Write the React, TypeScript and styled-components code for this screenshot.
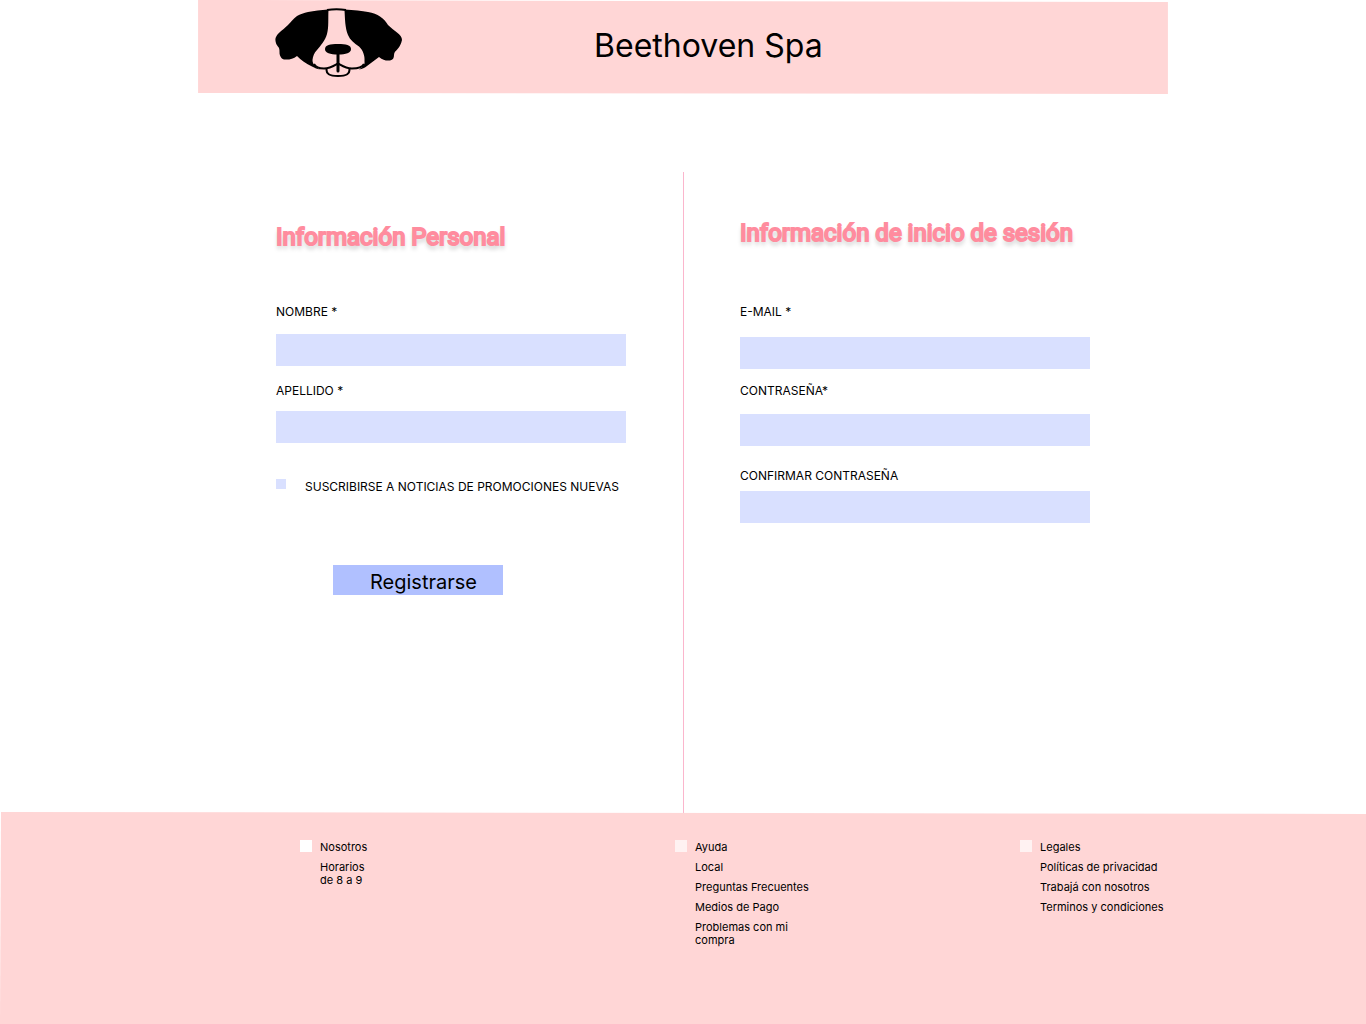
import React from "react";
import styled, { createGlobalStyle } from "styled-components";

const GlobalStyle = createGlobalStyle`
  *, *::before, *::after { box-sizing: border-box; }
  body {
    margin: 0;
    background: #ffffff;
    color: #000000;
    font-family: Inter, "Liberation Sans", sans-serif;
  }
`;

const Page = styled.div`
  display: flex;
  flex-direction: column;
  min-height: 100vh;
`;

const Header = styled.header`
  display: flex;
  align-items: flex-start;
  width: 71%;
  margin-left: 14.5%;
  padding: 8px 76px 17px;
  background: #ffd6d6;
  clip-path: polygon(0 0, 100% 2px, 100% 100%, 0 calc(100% - 1px));
`;

const Logo = styled.svg`
  flex: none;
  width: 130px;
  height: 69px;
`;

const Brand = styled.h1`
  margin: 18px 0 0 190px;
  font-size: 32px;
  line-height: 39px;
  font-weight: 400;
  white-space: nowrap;
`;

const Form = styled.form`
  flex: 1;
  display: grid;
  grid-template-columns: repeat(2, minmax(0, 1fr));
  margin-top: 78px;
  margin-bottom: -1px;
`;

const Column = styled.section<{ $side: "left" | "right" }>`
  display: flex;
  flex-direction: column;
  padding: ${(p) => (p.$side === "left" ? "50px 57px 0 276px" : "46px 276px 0 56px")};
  border-left: ${(p) => (p.$side === "right" ? "1px solid #fbb6cd" : "0")};
`;

const Heading = styled.h2<{ $gap: number }>`
  margin: 0 0 ${(p) => p.$gap}px;
  font-family: Roboto, "Liberation Sans", sans-serif;
  font-size: 24px;
  line-height: 30px;
  font-weight: 400;
  white-space: nowrap;
  color: #ff8fb0;
  -webkit-text-stroke: 2px #ff8c9e;
  text-shadow: 0 4px 4px rgba(0, 0, 0, 0.25);
`;

const Field = styled.div<{ $gap: number; $after: number }>`
  display: flex;
  flex-direction: column;
  gap: ${(p) => p.$gap}px;
  margin-bottom: ${(p) => p.$after}px;
`;

const Label = styled.label`
  font-size: 12px;
  line-height: 15px;
`;

const TextInput = styled.input`
  width: 100%;
  height: 32px;
  padding: 0 8px;
  border: 0;
  border-radius: 0;
  background: #d9e0ff;
  font: inherit;
  font-size: 14px;
`;

const CheckRow = styled.div`
  display: flex;
  align-items: flex-start;
  gap: 19px;
`;

const Checkbox = styled.input`
  appearance: none;
  flex: none;
  width: 10px;
  height: 10px;
  margin: 0;
  background: #d9e0ff;
  &:checked { background: #5f7fff; }
`;

const CheckLabel = styled(Label)`
  white-space: nowrap;
`;

const SubmitButton = styled.button`
  width: 170px;
  height: 30px;
  margin: 71px 0 0 57px;
  padding: 4px 0 0 37px;
  border: 0;
  background: #b0c0ff;
  color: inherit;
  font: inherit;
  font-size: 20px;
  line-height: 26px;
  text-align: left;
  cursor: pointer;
`;

const Footer = styled.footer`
  display: grid;
  grid-template-columns: 375fr 345fr 346fr;
  min-height: 212px;
  padding: 28px 0 28px 300px;
  background: #ffd6d6;
  clip-path: polygon(1px 0, 100% 2px, 100% 100%, 0 100%);
`;

const FooterGroup = styled.nav`
  display: flex;
  align-items: flex-start;
  gap: 8px;
`;

const Marker = styled.span<{ $faded?: boolean }>`
  flex: none;
  width: 12px;
  height: 12px;
  background: ${(p) => (p.$faded ? "#fff2f2" : "#ffffff")};
`;

const LinkList = styled.ul`
  display: flex;
  flex-direction: column;
  gap: 7px;
  margin: 1px 0 0;
  padding: 0;
  list-style: none;
  font-size: 11px;
  line-height: 13px;
`;

const FooterLink = styled.a`
  color: inherit;
  text-decoration: none;
`;

const DogLogo = () => (
  <Logo viewBox="0 0 130 69" role="img" aria-label="Beethoven Spa">
    <path d="M54 1.500C47 2 40 3 34 4C30 5 26 6 23 8C19 11 17 14 14 17C11 20 8 22 6 24C3 27 1 29 1.500 33C2 37 4 38 5 40C6 43 5 45 6 47.500C7 50 8 51 10 51.500C15 52 19 51 23 48C27 52 32 56 38 58.500C41 60 43 61 46 61.500C41 59 38.500 56 38.500 52C39 48 40 45 43 42C47 37 51 33 53 26C55 19 54 10 54.500 2Z" />
    <path d="M70.500 1.500C80 2 88 3 94 4C99 5 103 6 106 8.500C110 11 112 14 114 17C117 20 120 22 123 24.500C126 27 128 29 128 32C127 36 126 38 124 40.500C122 43 120 44 120 47C120 50 119 52 116 52.500C112 53 109 52 105 49C101 52 97 55 93 58C91 60 88 61 85 61.500C89 59 91 57 90.500 53C91 48 89 42 85 38.500C80 35 76 32 74 27C71 20 71 10 70.500 2Z" />
    <path
      d="M53 2C59 1 66 1 72 2M40 56C42 60 46 60.500 50 60.500C57 60.500 61 57 64 55.500C67 57 71 60.500 78 60.500C83 60.500 88 60 90 56M53 60C51 66 56 68 64 68C72 68 77 66 75 60"
      fill="none"
      stroke="#000"
      strokeWidth="2"
    />
    <path d="M51 41C51 37 56 36 64 36C72 36 77 37 77 41C77 45 72 46.500 64 46.500C56 46.500 51 45 51 41Z" />
    <path d="M64 46V63" fill="none" stroke="#000" strokeWidth="3" strokeLinecap="round" />
  </Logo>
);

type FieldData = { id: string; label: string; type: string; gap: number; after: number };

const personal: FieldData[] = [
  { id: "nombre", label: "NOMBRE *", type: "text", gap: 15, after: 17 },
  { id: "apellido", label: "APELLIDO *", type: "text", gap: 13, after: 36 },
];

const access: FieldData[] = [
  { id: "email", label: "E-MAIL *", type: "email", gap: 18, after: 14 },
  { id: "clave", label: "CONTRASEÑA*", type: "password", gap: 16, after: 22 },
  { id: "confirmar", label: "CONFIRMAR CONTRASEÑA", type: "password", gap: 8, after: 0 },
];

const footerGroups = [
  { faded: false, links: [["Nosotros"], ["Horarios", "de 8 a 9"]] },
  { faded: true, links: [["Ayuda"], ["Local"], ["Preguntas Frecuentes"], ["Medios de Pago"], ["Problemas con mi", "compra"]] },
  { faded: true, links: [["Legales"], ["Políticas de privacidad"], ["Trabajá con nosotros"], ["Terminos y condiciones"]] },
];

const Fields = ({ items }: { items: FieldData[] }) => (
  <>
    {items.map((f) => (
      <Field key={f.id} $gap={f.gap} $after={f.after}>
        <Label htmlFor={f.id}>{f.label}</Label>
        <TextInput id={f.id} name={f.id} type={f.type} />
      </Field>
    ))}
  </>
);

export default function App() {
  return (
    <Page>
      <GlobalStyle />
      <Header>
        <DogLogo />
        <Brand>Beethoven Spa</Brand>
      </Header>
      <Form onSubmit={(e) => e.preventDefault()}>
        <Column $side="left">
          <Heading $gap={52}>Información Personal</Heading>
          <Fields items={personal} />
          <CheckRow>
            <Checkbox type="checkbox" id="noticias" />
            <CheckLabel htmlFor="noticias">SUSCRIBIRSE A NOTICIAS DE PROMOCIONES NUEVAS</CheckLabel>
          </CheckRow>
          <SubmitButton type="submit">Registrarse</SubmitButton>
        </Column>
        <Column $side="right">
          <Heading $gap={56}>Información de inicio de sesión</Heading>
          <Fields items={access} />
        </Column>
      </Form>
      <Footer>
        {footerGroups.map((group) => (
          <FooterGroup key={group.links[0][0]} aria-label={group.links[0][0]}>
            <Marker $faded={group.faded} />
            <LinkList>
              {group.links.map((lines) => (
                <li key={lines[0]}>
                  <FooterLink href="#">
                    {lines.map((line, i) => (
                      <React.Fragment key={line}>
                        {i > 0 && <br />}
                        {line}
                      </React.Fragment>
                    ))}
                  </FooterLink>
                </li>
              ))}
            </LinkList>
          </FooterGroup>
        ))}
      </Footer>
    </Page>
  );
}
